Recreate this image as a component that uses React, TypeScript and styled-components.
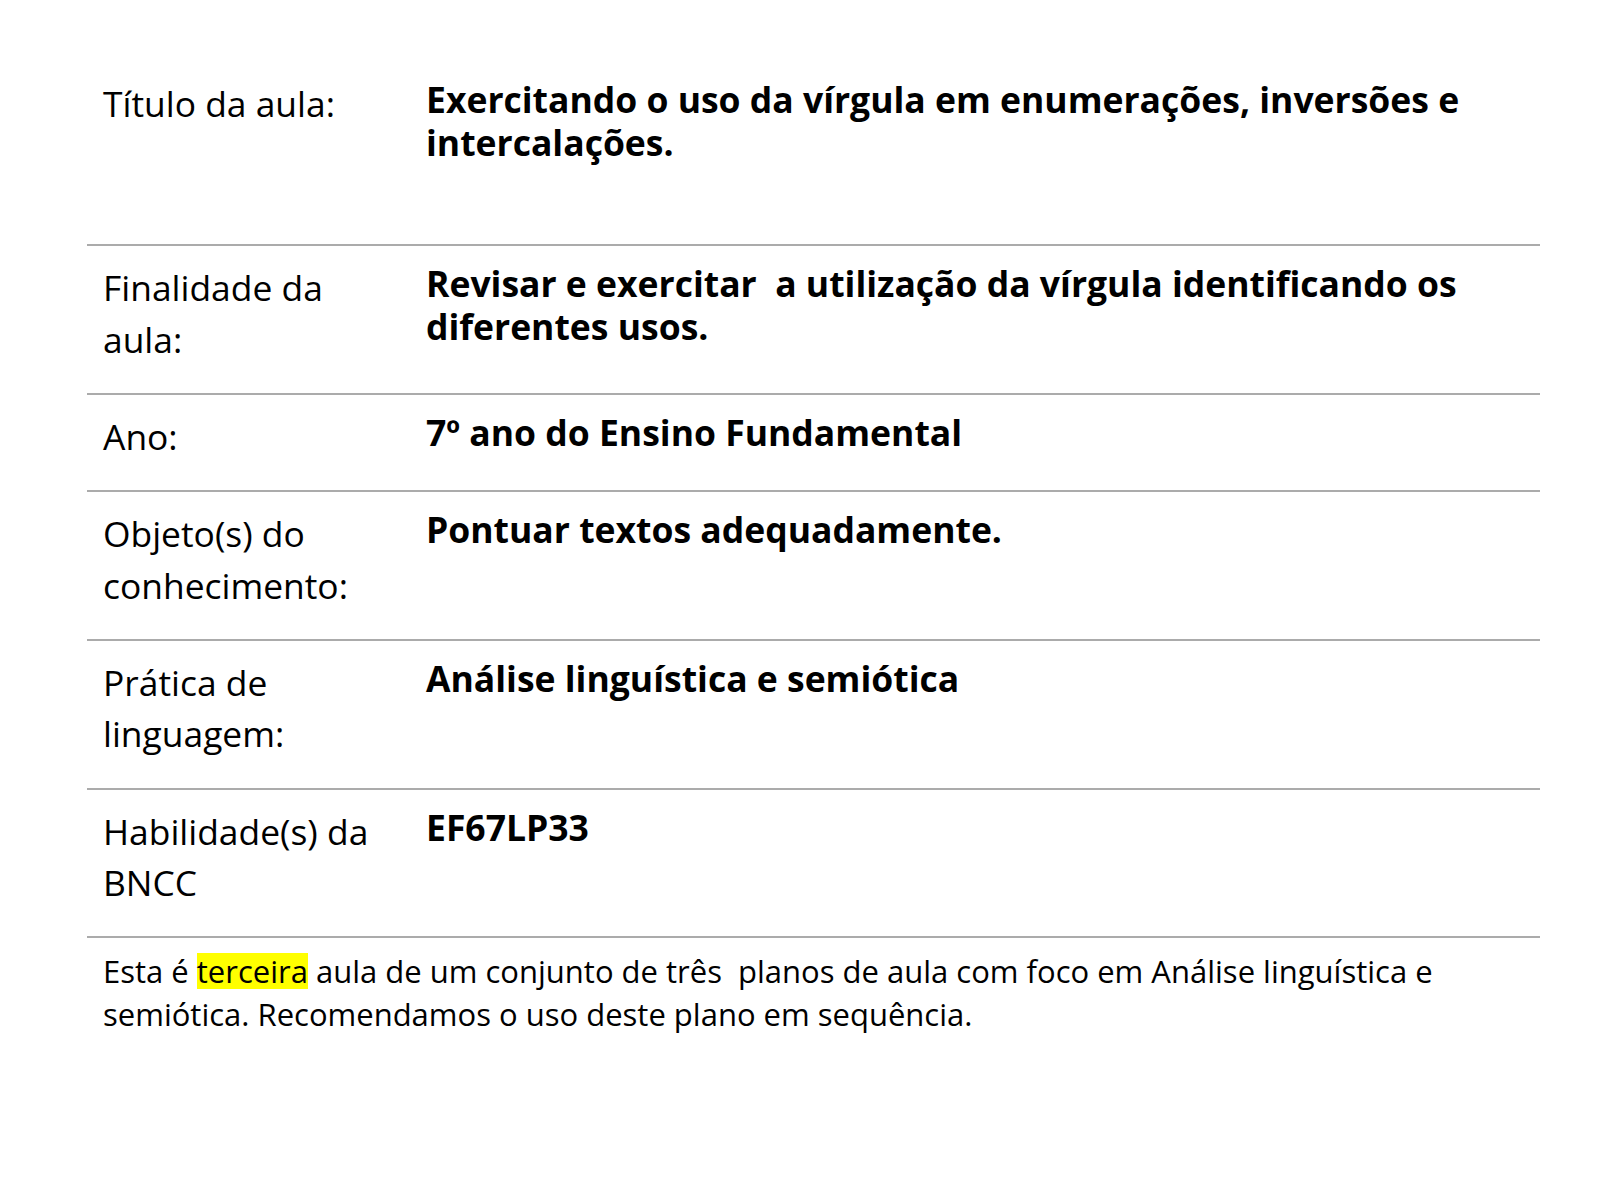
import React from "react";
import styled, { createGlobalStyle } from "styled-components";

const GlobalStyle = createGlobalStyle`
  html, body {
    margin: 0;
    padding: 0;
    background: #ffffff;
  }
  body {
    font-family: "Open Sans", "Noto Sans", "Liberation Sans", sans-serif;
    color: #000000;
  }
`;

const Page = styled.div`
  padding: 62px 60px 0 87px;
  width: 1453px;
`;

const Table = styled.div`
  display: flex;
  flex-direction: column;
`;

const Row = styled.div<{ $minHeight?: number }>`
  display: grid;
  grid-template-columns: 339px 1fr;
  padding: 16px 0 27.6px 0;
  border-bottom: 2px solid #ababab;
  min-height: ${(p) => (p.$minHeight ? `${p.$minHeight}px` : "auto")};
  box-sizing: border-box;
`;

const Label = styled.div`
  padding: 0 40px 0 16px;
  font-size: 35.4px;
  line-height: 51.6px;
  font-weight: 400;
`;

const Value = styled.div`
  padding-right: 30px;
  font-size: 35.5px;
  line-height: 43px;
  font-weight: 700;
`;

const Note = styled.p`
  margin: 12px 0 0 0;
  padding: 0 16px;
  font-size: 31px;
  line-height: 43px;
  font-weight: 400;
`;

const Highlight = styled.span`
  background: linear-gradient(
    to bottom,
    transparent 2.5px,
    #ffff00 2.5px,
    #ffff00 39.5px,
    transparent 39.5px
  );
`;

const rows: { label: string; value: string; minHeight?: number }[] = [
  {
    label: "Título da aula:",
    value: "Exercitando o uso da vírgula em enumerações, inversões e intercalações.",
    minHeight: 184,
  },
  {
    label: "Finalidade da aula:",
    value: "Revisar e exercitar\u00a0 a utilização da vírgula identificando os diferentes usos.",
  },
  { label: "Ano:", value: "7º ano do Ensino Fundamental" },
  { label: "Objeto(s) do conhecimento:", value: "Pontuar textos adequadamente." },
  { label: "Prática de linguagem:", value: "Análise linguística e semiótica" },
  { label: "Habilidade(s) da BNCC", value: "EF67LP33" },
];

export default function App() {
  return (
    <>
      <GlobalStyle />
      <Page>
        <Table>
          {rows.map((r) => (
            <Row key={r.label} $minHeight={r.minHeight}>
              <Label>{r.label}</Label>
              <Value>{r.value}</Value>
            </Row>
          ))}
        </Table>
        <Note>
          Esta é <Highlight>terceira</Highlight> aula de um conjunto de três{"\u00a0"} planos de aula com
          foco em Análise linguística e semiótica. Recomendamos o uso deste plano em sequência.
        </Note>
      </Page>
    </>
  );
}
